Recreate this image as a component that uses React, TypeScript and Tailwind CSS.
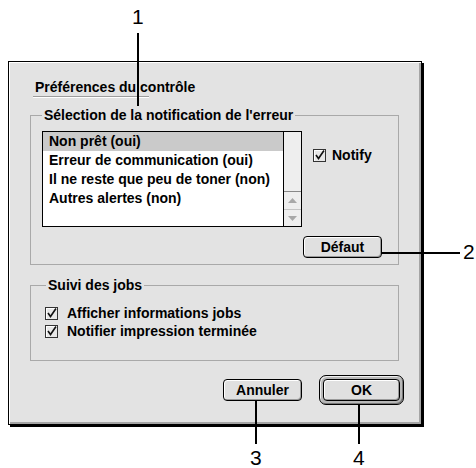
import React from 'react';

const Check: React.FC<{ checked?: boolean }> = ({ checked = true }) => (
  <span className="w-[13px] h-[13px] border border-[#333] bg-[#e8e8e8] shadow-[inset_1px_1px_0_#fff] flex items-center justify-center shrink-0">
    {checked && (
      <svg width="11" height="11" viewBox="0 0 11 11">
        <path d="M2 5 L4.5 8.5 L10 0.5" fill="none" stroke="#111" strokeWidth="1.6" />
      </svg>
    )}
  </span>
);

const Button: React.FC<{ label: string; w: string }> = ({ label, w }) => (
  <button
    className={`${w} h-[22px] rounded-[4px] border border-black bg-[#e0e0e0] shadow-[inset_1px_1px_0_#fff,inset_-1px_-1px_0_#9a9a9a] text-[14px] font-bold text-black leading-none`}
  >
    {label}
  </button>
);

const items = [
  'Non prêt (oui)',
  'Erreur de communication (oui)',
  'Il ne reste que peu de toner (non)',
  'Autres alertes (non)',
];

export default function App() {
  return (
    <div className="relative w-[476px] h-[468px] bg-white overflow-hidden font-['Liberation_Sans',Arial,sans-serif] text-black">
      {/* dialog */}
      <div className="ml-[8px] mt-[61px] w-[414px] h-[364px] border border-black bg-[#e3e3e3] shadow-[inset_1px_1px_0_#fff,inset_-2px_-2px_0_#a5a5a5,2px_2px_0_#000] flex flex-col">
        <div className="mt-[17px] ml-[26px] text-[14px] font-bold leading-[16px]">Préférences du contrôle</div>
        <div className="ml-[24px] mt-[1px] w-[116px] h-[2px] border-t border-[#9c9c9c] border-b-white border-b" />

        <fieldset className="ml-[21px] mt-[9px] w-[369px] border border-[#a9a9a9] pl-[11px] pr-[16px] pt-[8px] pb-[6px]">
          <legend className="px-[2px] text-[14px] font-bold leading-[16px]">Sélection de la notification de l'erreur</legend>
          <div className="flex">
            <div className="w-[260px] h-[96px] border border-black bg-white flex">
              <div className="flex-1 flex flex-col text-[14px] font-bold leading-[19px] whitespace-nowrap overflow-hidden">
                {items.map((t, i) => (
                  <div key={t} className={`h-[19px] pl-[6px] ${i === 0 ? 'bg-[#cacaca]' : ''}`}>{t}</div>
                ))}
              </div>
              <div className="w-[18px] border-l border-black bg-[#eeeeee] flex flex-col justify-end">
                <div className="h-[18px] border-t border-[#888] flex items-center justify-center">
                  <svg width="9" height="5" viewBox="0 0 9 5"><path d="M0 5 L4.5 0 L9 5 Z" fill="#a8a8a8" /></svg>
                </div>
                <div className="h-[17px] border-t border-[#c4c4c4] flex items-center justify-center">
                  <svg width="9" height="5" viewBox="0 0 9 5"><path d="M0 0 L4.5 5 L9 0 Z" fill="#a8a8a8" /></svg>
                </div>
              </div>
            </div>
            <div className="ml-[11px] mt-[18px] flex items-center gap-[6px] h-[13px]">
              <Check />
              <span className="text-[14px] font-bold leading-[13px]">Notify</span>
            </div>
          </div>
          <div className="mt-[9px] flex justify-end">
            <Button label="Défaut" w="w-[79px]" />
          </div>
        </fieldset>

        <fieldset className="ml-[21px] mt-[12px] w-[369px] border border-[#a9a9a9] pl-[14px] pt-[11px] pb-[20px]">
          <legend className="ml-[1px] px-[2px] text-[14px] font-bold leading-[16px]">Suivi des jobs</legend>
          <div className="flex flex-col">
            <div className="h-[18px] flex items-center gap-[9px]">
              <Check />
              <span className="text-[14px] font-bold">Afficher informations jobs</span>
            </div>
            <div className="h-[18px] flex items-center gap-[9px]">
              <Check />
              <span className="text-[14px] font-bold">Notifier impression terminée</span>
            </div>
          </div>
        </fieldset>

        <div className="mt-[14px] pr-[17px] flex justify-end items-center gap-[17px]">
          <Button label="Annuler" w="w-[79px]" />
          <div className="w-[85px] h-[30px] rounded-[7px] border border-black bg-[#b8b8b8] shadow-[inset_1px_1px_0_#eee,inset_-1px_-1px_0_#777] flex items-center justify-center">
            <Button label="OK" w="w-[77px]" />
          </div>
        </div>
      </div>

      {/* callouts */}
      <div className="absolute left-[132px] top-[5px] text-[21px] leading-[24px] font-light">1</div>
      <div className="absolute left-[137px] top-[33px] w-[2px] h-[73px] bg-black" />
      <div className="absolute left-[381px] top-[252px] w-[79px] h-[2px] bg-black" />
      <div className="absolute left-[463px] top-[240px] text-[21px] leading-[24px] font-light">2</div>
      <div className="absolute left-[255px] top-[401px] w-[2px] h-[43px] bg-black" />
      <div className="absolute left-[250px] top-[446px] text-[21px] leading-[24px] font-light">3</div>
      <div className="absolute left-[358px] top-[404px] w-[2px] h-[40px] bg-black" />
      <div className="absolute left-[353px] top-[446px] text-[21px] leading-[24px] font-light">4</div>
    </div>
  );
}
